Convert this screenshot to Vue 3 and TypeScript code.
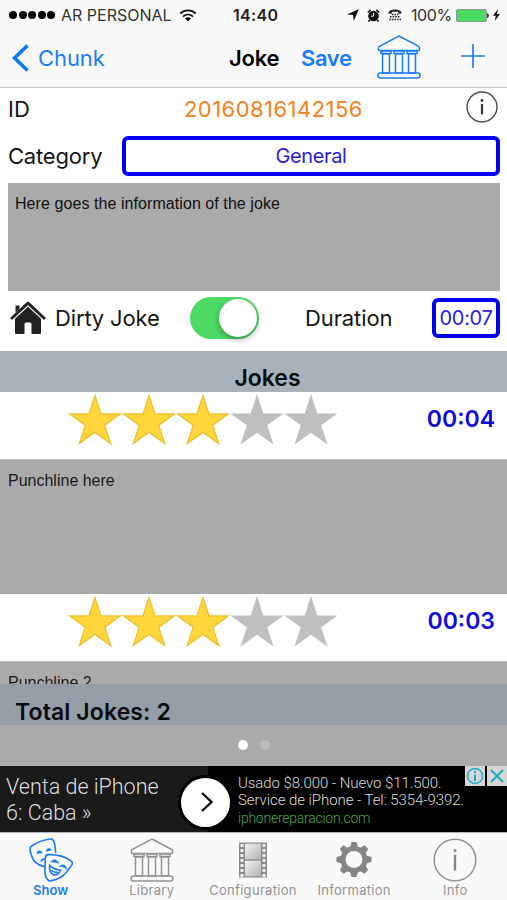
<script setup lang="ts">
interface JokeItem {
  id: number
  text: string
  rating: number
  duration: string
}

interface Tab {
  key: string
  label: string
}

const jokes: JokeItem[] = [
  { id: 1, text: 'Punchline here', rating: 3, duration: '00:04' },
  { id: 2, text: 'Punchline 2', rating: 3, duration: '00:03' },
]

const tabs: Tab[] = [
  { key: 'show', label: 'Show' },
  { key: 'library', label: 'Library' },
  { key: 'configuration', label: 'Configuration' },
  { key: 'information', label: 'Information' },
  { key: 'about', label: 'Info' },
]

const activeTab = 'show'
const starPoints =
  '27,2 33.3,21.4 53.6,21.4 37.2,33.3 43.5,52.6 27,40.7 10.5,52.6 16.8,33.3 0.4,21.4 20.7,21.4'
const goldPoints =
  '27,3.6 33,21.9 52.3,21.9 36.7,33.1 42.7,51.5 27,40.1 11.3,51.5 17.3,33.1 1.7,21.9 21,21.9'
const gearAngles = [0, 45, 90, 135, 180, 225, 270, 315]
const filmHoles = [2, 7, 12, 17, 22, 27, 32]
</script>

<template>
  <div class="screen">
    <header class="status">
      <div class="status-left">
        <span class="signal"><i v-for="n in 5" :key="n"></i></span>
        <span class="carrier">AR PERSONAL</span>
        <svg class="wifi" width="18" height="13" viewBox="0 0 18 13">
          <path d="M1.2 4.7A11 11 0 0 1 16.8 4.7M4 7.6A7 7 0 0 1 14 7.6" fill="none" stroke="#111" stroke-width="1.7" />
          <path d="M6 9.6A4.3 4.3 0 0 1 12 9.6L9 12.6Z" fill="#111" />
        </svg>
      </div>
      <span class="clock">14:40</span>
      <div class="status-right">
        <svg width="12" height="12" viewBox="0 0 12 12"><path d="M12 0L6.7 12L6 6L0 5.4Z" fill="#111" /></svg>
        <svg width="13" height="13" viewBox="0 0 13 13">
          <circle cx="6.5" cy="7" r="5.3" fill="#111" />
          <path d="M.8 3.5L3.6 .9M12.2 3.5L9.4 .9M2.8 11L1.5 12.6M10.2 11L11.5 12.6" stroke="#111" stroke-width="1.6" />
          <path d="M6.5 3.8V7.2H4" fill="none" stroke="#fff" stroke-width="1" />
        </svg>
        <svg width="14" height="12" viewBox="0 0 14 12">
          <path d="M.3 4.5C.5 1.5 3.5.4 7 .4S13.5 1.5 13.7 4.5L10.5 4.7L10 2.8H4L3.5 4.7Z" fill="#222" />
          <path d="M3.8 5.5H10.5M2 7.7H12.5M1.2 10.5H13" stroke="#222" stroke-width="1.5" stroke-dasharray="1.6 1" />
        </svg>
        <span class="percent">100%</span>
        <svg class="battery" width="33" height="13" viewBox="0 0 33 13">
          <rect x=".5" y=".5" width="30" height="12" rx="1.5" fill="#4cd964" stroke="#8f9a91" />
          <path d="M31 4Q33 4.5 33 6.5T31 9Z" fill="#333" />
        </svg>
        <svg width="7" height="12" viewBox="0 0 7 12"><path d="M5 0L0 6.7H2.8L1.7 12L7 5H4Z" fill="#111" /></svg>
      </div>
    </header>

    <nav class="nav">
      <button class="back">
        <svg width="17" height="28" viewBox="0 0 17 28">
          <path d="M15.5 1.5L2.5 14L15.5 26.5" fill="none" stroke="#0b78f8" stroke-width="3.6" />
        </svg>
        <span>Chunk</span>
      </button>
      <h1>Joke</h1>
      <button class="save">Save</button>
      <svg class="museum" width="44" height="44" viewBox="0 0 44 44">
        <path d="M22 1L42 11.5Q44 15.5 41 15.5H3Q0 15.5 2 11.5Z" />
        <path d="M4 16H14V18.5H4ZM17 16H27V18.5H17ZM30 16H40V18.5H30ZM5.5 19H12.5V38H5.5ZM18.5 19H25.5V38H18.5ZM31.5 19H38.5V38H31.5Z" />
        <rect x="1" y="38" width="42" height="5" rx="2.5" />
      </svg>
      <svg class="plus" width="24" height="24" viewBox="0 0 24 24">
        <path d="M12 0V24M0 12H24" stroke="#1c7cf4" stroke-width="1.7" />
      </svg>
    </nav>

    <section class="form">
      <div class="row id-row">
        <span class="label id-label">ID</span>
        <span class="id-value">20160816142156</span>
        <svg class="details" width="32" height="32" viewBox="0 0 32 32">
          <circle cx="16" cy="16" r="15" fill="none" stroke="#484848" stroke-width="1.4" />
          <circle cx="16" cy="9.5" r="1.4" fill="#333" />
          <path d="M16 13V23.5" stroke="#333" stroke-width="2.2" />
        </svg>
      </div>
      <div class="row category-row">
        <span class="label category-label">Category</span>
        <div class="category">General</div>
      </div>
      <div class="description">Here goes the information of the joke</div>
      <div class="row options">
        <svg class="house" width="38" height="34" viewBox="0 0 38 34">
          <path class="roof" d="M2 18L19 2.2L36 18" />
          <path d="M6.5 4.5H10.5V8L6.5 11.5Z" fill="#222" />
          <path d="M19 5.8L32 17.8V32Q32 33 31 33H22.5V23Q22.5 21.5 21 21.5H17Q15.5 21.5 15.5 23V33H7Q6 33 6 32V17.8Z" fill="#222" />
        </svg>
        <span class="label dirty">Dirty Joke</span>
        <span class="switch"><i></i></span>
        <span class="label duration-label">Duration</span>
        <div class="duration">00:07</div>
      </div>
    </section>

    <h2 class="section-title">Jokes</h2>

    <main class="list">
      <article v-for="joke in jokes" :key="joke.id" class="joke">
        <div class="joke-head">
          <div class="stars">
            <svg v-for="n in 5" :key="n" width="54" height="54" viewBox="0 0 54 54" :class="{ on: n <= joke.rating }">
              <polygon :points="n <= joke.rating ? goldPoints : starPoints" />
            </svg>
          </div>
          <span class="time">{{ joke.duration }}</span>
        </div>
        <div class="joke-text">{{ joke.text }}</div>
      </article>
    </main>

    <div class="total"><span>Total Jokes: 2</span></div>
    <div class="pager"><i class="current"></i><i></i></div>

    <aside class="ad">
      <div class="ad-title">Venta de iPhone<br />6: Caba »</div>
      <div class="ad-go">
        <svg width="12" height="20" viewBox="0 0 12 20"><path d="M1 1L10.5 10L1 19" fill="none" stroke="#111" stroke-width="2.4" /></svg>
      </div>
      <div class="ad-copy">
        <span>Usado $8.000 - Nuevo $11.500.</span>
        <span>Service de iPhone - Tel: 5354-9392.</span>
        <span class="ad-link">iphonereparacion.com</span>
      </div>
      <div class="ad-tools">
        <svg width="20" height="20" viewBox="0 0 20 20">
          <circle cx="10" cy="10" r="7.5" fill="none" stroke="#20a9c9" stroke-width="1.5" />
          <path d="M10 5V7M10 8.5V15" stroke="#20a9c9" stroke-width="2" />
        </svg>
        <svg width="20" height="20" viewBox="0 0 20 20"><path d="M4 4L16 16M16 4L4 16" stroke="#20a9c9" stroke-width="2" /></svg>
      </div>
    </aside>

    <footer class="tabs">
      <button v-for="tab in tabs" :key="tab.key" class="tab" :class="[tab.key, { active: tab.key === activeTab }]">
        <svg v-if="tab.key === 'show'" class="masks" width="44" height="44" viewBox="27 10 132 132">
          <path d="M73 96Q41 88 35 64Q30 50 30 44Q29 38 35 34Q60 17 90 13Q98 11 101 19Q106 32 107 55" />
          <path d="M84 60Q76 61 76 70L75 101Q73 124 83 135Q86 140 94 138Q124 132 137 115Q149 101 156 90Q160 83 152 78Q124 58 84 60Z" />
          <path d="M51 56Q57 45 66 54Q58 51 51 56ZM80 49Q84 39 93 46Q86 44 80 49ZM63 81Q66 72 75 74M97 80Q105 73 112 83Q104 80 97 80ZM123 94Q132 88 137 99Q130 94 123 94ZM89 92Q104 106 122 106Q115 123 101 120Q87 116 89 92Z" />
          <path d="M94 107Q103 114 114 113" />
        </svg>
        <svg v-else-if="tab.key === 'library'" class="museum" width="44" height="44" viewBox="0 0 44 44">
          <path d="M22 1L42 11.5Q44 15.5 41 15.5H3Q0 15.5 2 11.5Z" />
          <path d="M4 16H14V18.5H4ZM17 16H27V18.5H17ZM30 16H40V18.5H30ZM5.5 19H12.5V38H5.5ZM18.5 19H25.5V38H18.5ZM31.5 19H38.5V38H31.5Z" />
          <rect x="1" y="38" width="42" height="5" rx="2.5" />
        </svg>
        <svg v-else-if="tab.key === 'configuration'" width="28" height="44" viewBox="0 -4.5 28 44">
          <defs>
            <linearGradient id="frame" x1="0" y1="0" x2="1" y2="1">
              <stop offset="0" stop-color="#f2f2f2" /><stop offset="1" stop-color="#b2b2b2" />
            </linearGradient>
          </defs>
          <rect width="28" height="35" fill="#8b8b8b" />
          <rect x="6" y="1.2" width="16" height="15.6" fill="url(#frame)" />
          <rect x="6" y="18.2" width="16" height="15.6" fill="url(#frame)" />
          <template v-for="y in filmHoles" :key="y">
            <rect x="1.5" :y="y - 0.5" width="3" height="3" fill="#eee" />
            <rect x="23.5" :y="y - 0.5" width="3" height="3" fill="#eee" />
          </template>
        </svg>
        <svg v-else-if="tab.key === 'information'" width="36" height="44" viewBox="-18 -21.5 36 44">
          <circle r="11" fill="none" stroke="#858585" stroke-width="5" />
          <path v-for="a in gearAngles" :key="a" d="M-4 -12L-2.5 -17.5H2.5L4 -12Z" :transform="`rotate(${a})`" fill="#858585" />
        </svg>
        <svg v-else width="44" height="44" viewBox="0 0 44 44">
          <circle cx="22" cy="22" r="20.8" fill="none" stroke="#929292" stroke-width="1.5" />
          <circle cx="22" cy="12.5" r="1.5" fill="#858585" />
          <path d="M22 17V32.5" stroke="#858585" stroke-width="2.4" />
        </svg>
        <span>{{ tab.label }}</span>
      </button>
    </footer>
  </div>
</template>

<style>
body {
  margin: 0;
  background: #fff;
}
</style>

<style scoped>
* {
  box-sizing: border-box;
}
.screen {
  width: 507px;
  height: 900px;
  overflow: hidden;
  display: flex;
  flex-direction: column;
  background: #fff;
  color: #151515;
  font-family: Inter, sans-serif;
  font-size: 22px;
  white-space: nowrap;
}
.screen > * {
  flex: none;
}
svg {
  display: block;
  flex: none;
}
button {
  padding: 0;
  border: 0;
  background: none;
  color: inherit;
  font: inherit;
  letter-spacing: inherit;
}
h1,
h2 {
  margin: 0;
  font-size: 22px;
  font-weight: 600;
}
.status {
  height: 30px;
  display: grid;
  grid-template-columns: 233px 45px 1fr;
  align-items: center;
  background: #f9f9f9;
  font-size: 16px;
}
.status-left,
.status-right {
  display: flex;
  align-items: center;
}
.signal {
  display: flex;
  gap: 1.5px;
  padding-left: 9px;
  width: 61px;
}
.signal i {
  width: 8px;
  height: 8px;
  border-radius: 50%;
  background: #000;
}
.carrier {
  width: 118px;
  color: #333;
}
.clock {
  font-weight: 600;
  letter-spacing: 0.3px;
  color: #222;
}
.status-right {
  padding-left: 69px;
}
.status-right svg + svg {
  margin-left: 8px;
}
.percent {
  width: 45px;
  margin-left: 9px;
  letter-spacing: -0.4px;
  color: #333;
}
.status-right .battery + svg {
  margin-left: 4px;
}
.nav {
  height: 58px;
  display: flex;
  align-items: center;
  padding-bottom: 2px;
  background: #f9f9f9;
  border-bottom: 1px solid #c6c6c6;
  color: #1c7cf4;
}
.back {
  display: flex;
  align-items: center;
  gap: 9px;
  width: 229px;
  padding-left: 12px;
  letter-spacing: -0.1px;
}
.nav h1 {
  width: 72px;
  color: #000;
  letter-spacing: -0.2px;
}
.save {
  width: 76px;
  text-align: left;
  font-weight: 600;
  letter-spacing: -0.4px;
}
.museum {
  fill: none;
  stroke: currentColor;
  stroke-width: 1.5;
}
.nav .museum {
  margin-top: -2px;
}
.plus {
  margin: -3px 0 0 40px;
}
.form {
  height: 263px;
  padding: 0 7px 0 8px;
}
.row {
  display: flex;
  align-items: center;
}
.id-row {
  height: 42px;
}
.id-label {
  width: 176px;
}
.id-value {
  width: 282px;
  color: #f48120;
  letter-spacing: 0.45px;
}
.details {
  margin-top: -4px;
}
.category-row {
  height: 52px;
  margin-bottom: 1px;
}
.category-label {
  width: 114px;
  letter-spacing: -0.2px;
}
.category,
.duration {
  height: 40px;
  display: flex;
  align-items: center;
  justify-content: center;
  border: 4px solid #0000ee;
  border-radius: 6px;
  color: #2a20dc;
  font-size: 20px;
  letter-spacing: -0.35px;
}
.category {
  flex: 1;
}
.description {
  height: 108px;
  padding: 12px 7px;
  background: #aaa;
  color: #111;
  font: 16px/18px 'Liberation Sans', sans-serif;
  letter-spacing: 0.07px;
}
.options {
  height: 54px;
}
.house {
  margin-left: 1px;
}
.roof {
  fill: none;
  stroke: #222;
  stroke-width: 3;
  stroke-linejoin: round;
}
.dirty {
  width: 135px;
  margin-left: 8px;
  letter-spacing: -0.15px;
}
.switch {
  width: 69px;
  height: 42px;
  padding: 2px;
  border-radius: 21px;
  background: #4cd964;
  display: flex;
  justify-content: flex-end;
}
.switch i {
  width: 38px;
  height: 38px;
  border-radius: 50%;
  background: #fff;
  box-shadow: 0 3px 6px rgba(0, 0, 0, 0.3);
}
.duration-label {
  width: 127px;
  margin-left: 46px;
  letter-spacing: -0.1px;
}
.duration {
  width: 68px;
}
.section-title {
  height: 41px;
  padding: 14px 0 0 28px;
  line-height: 27px;
  font-size: 23px;
  text-align: center;
  background: #a7b1ba;
  color: #0a0d10;
}
.list {
  height: 292px;
  overflow: hidden;
}
.joke-head {
  height: 68px;
  display: flex;
  justify-content: space-between;
  padding: 0 12px 0 68px;
  border-bottom: 1px solid #c0c0c0;
}
.stars {
  display: flex;
}
.stars polygon {
  fill: #bfbfbf;
}
.stars .on polygon {
  fill: #ffd63c;
  stroke: #e9c02d;
  stroke-width: 1.3;
}
.time {
  line-height: 55px;
  color: #1109d6;
  font-size: 23px;
  font-weight: 600;
}
.joke-text {
  height: 134px;
  padding: 12px 8px;
  background: #aaa;
  color: #1a1a1a;
  font: 16px/18px 'Liberation Sans', sans-serif;
}
.total {
  height: 41px;
  padding: 0 15px;
  line-height: 56px;
  background: #959da6;
  color: #0a0d10;
  font-size: 23px;
  font-weight: 600;
  letter-spacing: 0.12px;
}
.pager {
  height: 41px;
  display: flex;
  justify-content: center;
  align-items: center;
  gap: 12px;
  padding-bottom: 2px;
  background: #aaa;
}
.pager i {
  width: 10px;
  height: 10px;
  border-radius: 50%;
  background: #bcbcbc;
}
.pager .current {
  background: #fff;
}
.ad {
  position: relative;
  height: 66px;
  display: flex;
  align-items: center;
  background: linear-gradient(90deg, #1a1a1a 208px, #000 208px);
  color: #ddd;
  font-family: Roboto, sans-serif;
  font-weight: 300;
}
.ad-title {
  width: 181px;
  padding: 1px 0 0 6px;
  font-size: 21.5px;
  line-height: 26px;
}
.ad-go {
  width: 49px;
  height: 49px;
  margin-top: 6px;
  padding-left: 3px;
  display: flex;
  align-items: center;
  justify-content: center;
  border-radius: 50%;
  background: #fff;
  box-shadow: 0 0 0 3px #000;
}
.ad-copy {
  display: flex;
  flex-direction: column;
  margin: 2px 0 0 8px;
  font-size: 15px;
  line-height: 17.5px;
  letter-spacing: -0.07px;
}
.ad-link {
  color: #4aa653;
  font-size: 14px;
  line-height: 16px;
  letter-spacing: -0.25px;
}
.ad-tools {
  position: absolute;
  top: 0;
  right: 0;
  display: flex;
  gap: 2px;
}
.ad-tools svg {
  background: #d6d6d6;
}
.tabs {
  height: 68px;
  display: grid;
  grid-template-columns: repeat(5, 101.2px);
  background: #f9f9f9;
  border-top: 1px solid #b5b5b5;
  color: #929292;
  font-size: 13px;
  letter-spacing: 0.3px;
}
.tab {
  display: flex;
  flex-direction: column;
  align-items: center;
  padding-top: 5px;
}
.tab span {
  line-height: 17px;
}
.active {
  color: #1c7cf4;
  font-weight: 600;
  letter-spacing: 0;
}
.masks {
  fill: none;
  stroke: currentColor;
  stroke-width: 5;
}
</style>
